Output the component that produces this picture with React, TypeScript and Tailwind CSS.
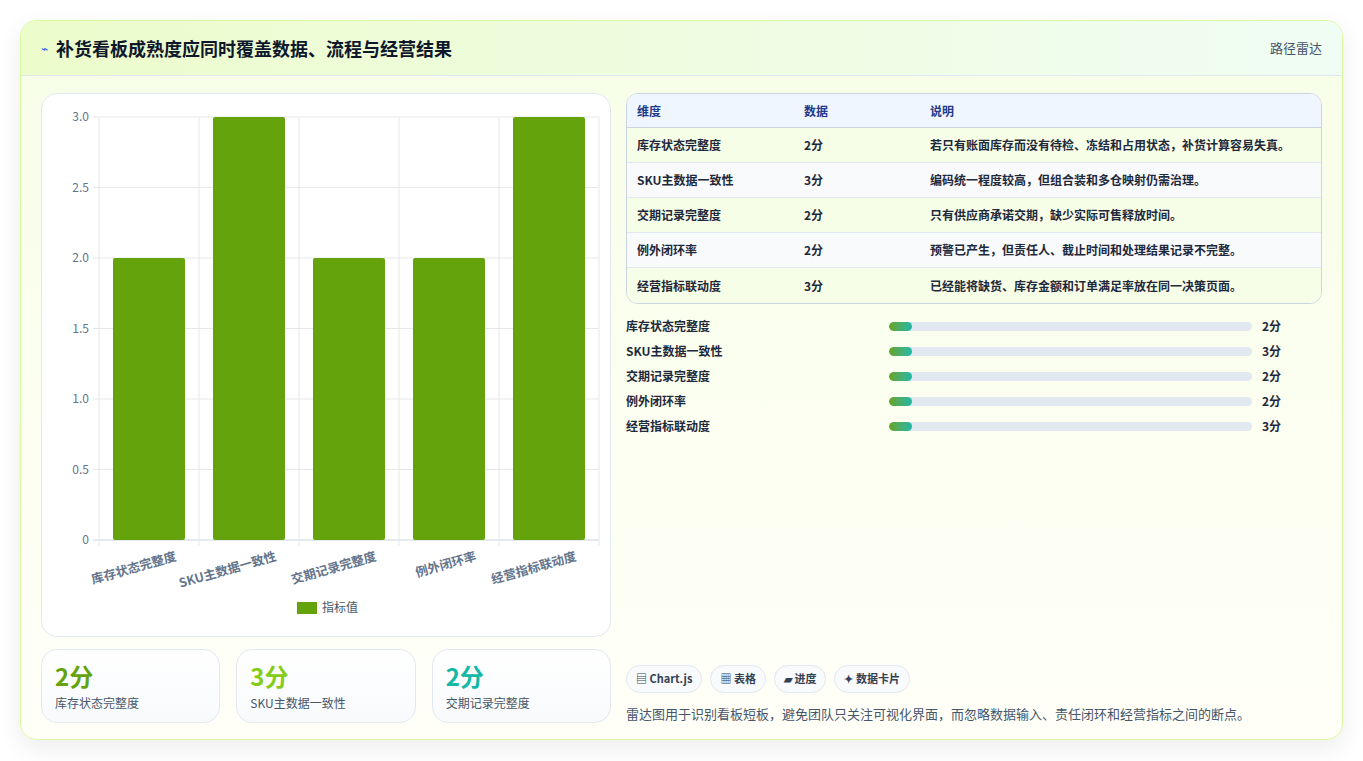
const rows = [
  { name: '库存状态完整度', v: 2, note: '若只有账面库存而没有待检、冻结和占用状态，补货计算容易失真。' },
  { name: 'SKU主数据一致性', v: 3, note: '编码统一程度较高，但组合装和多仓映射仍需治理。' },
  { name: '交期记录完整度', v: 2, note: '只有供应商承诺交期，缺少实际可售释放时间。' },
  { name: '例外闭环率', v: 2, note: '预警已产生，但责任人、截止时间和处理结果记录不完整。' },
  { name: '经营指标联动度', v: 3, note: '已经能将缺货、库存金额和订单满足率放在同一决策页面。' },
];

function Chart() {
  const x0 = 57, top = 23, bottom = 446, w = 500;
  const unit = (bottom - top) / 3;
  const ticks = [0, 0.5, 1, 1.5, 2, 2.5, 3];
  return (
    <svg width="568" height="541" viewBox="0 0 568 541" className="block">
      {ticks.map(t => {
        const y = bottom - t * unit;
        return (
          <g key={t}>
            <line x1={x0 - 6} x2={x0 + w} y1={y} y2={y} stroke={t === 0 ? '#cbd5e1' : '#e5e7eb'} />
            <text x={x0 - 10} y={y + 4} textAnchor="end" fontSize="12" fill="#64748b">{t === 0 ? '0' : t.toFixed(1)}</text>
          </g>
        );
      })}
      {[0, 1, 2, 3, 4, 5].map(i => (
        <line key={i} x1={x0 + i * 100} x2={x0 + i * 100} y1={top} y2={bottom + 6} stroke="#e5e7eb" />
      ))}
      {rows.map((r, i) => {
        const h = r.v * unit;
        const cx = x0 + i * 100 + 50;
        return (
          <g key={r.name}>
            <rect x={cx - 36} y={bottom - h} width="72" height={h} fill="#65a30d" rx="2" />
            <text x={cx + 28} y={bottom + 20} textAnchor="end" fontSize="12.5" fontWeight="600" fill="#64748b" transform={`rotate(-16 ${cx + 28} ${bottom + 20})`}>{r.name}</text>
          </g>
        );
      })}
      <rect x="255" y="508" width="20" height="12" fill="#65a30d" />
      <text x="280" y="518" fontSize="12" fill="#475569">指标值</text>
    </svg>
  );
}

export default function App() {
  return (
    <div className="min-h-screen bg-white p-5" style={{ fontFamily: '"Noto Sans CJK SC", "Noto Sans", sans-serif' }}>
      <div className="h-[720px] rounded-2xl border border-[#d9f99d] bg-gradient-to-b from-[#f7fee7] to-[#fffff8] shadow-[0_8px_24px_rgba(0,0,0,0.08)] overflow-hidden flex flex-col">
        <div className="h-[55px] shrink-0 flex items-center justify-between px-5 bg-gradient-to-r from-[#ecfccb] to-[#f0fdf4] border-b border-[#e2e8f0]">
          <div className="flex items-center gap-2">
            <span className="text-[#2563eb] text-xs">⌁</span>
            <h1 className="text-[18px] font-bold text-[#0f172a]">补货看板成熟度应同时覆盖数据、流程与经营结果</h1>
          </div>
          <span className="text-[13px] text-[#475569]">路径雷达</span>
        </div>
        <div className="flex-1 flex gap-[15px] px-5 pt-[17px] pb-[18px]">
          <div className="w-[570px] flex flex-col gap-3">
            <div className="h-[544px] rounded-2xl border border-[#e2e8f0] bg-white">
              <Chart />
            </div>
            <div className="flex gap-4">
              {[
                ['2分', '库存状态完整度', 'text-[#65a30d]'],
                ['3分', 'SKU主数据一致性', 'text-[#84cc16]'],
                ['2分', '交期记录完整度', 'text-[#14b8a6]'],
              ].map(([v, l, c]) => (
                <div key={l} className="flex-1 h-[74px] rounded-2xl border border-[#e2e8f0] bg-gradient-to-b from-white to-[#f8fafc] px-[13px] pt-[10px]">
                  <div className={`text-[24px] font-bold leading-8 ${c}`}>{v}</div>
                  <div className="text-[12px] text-[#475569] mt-[2px]">{l}</div>
                </div>
              ))}
            </div>
          </div>
          <div className="flex-1 flex flex-col">
            <div className="rounded-xl border border-[#cbd5e1] overflow-hidden bg-white text-[12px] text-[#1e293b]">
              <div className="flex h-[34px] items-center bg-[#eff6ff] border-b border-[#cbd5e1] font-bold text-[#1e3a8a] px-[10px]">
                <div className="w-[167px]">维度</div>
                <div className="w-[126px]">数据</div>
                <div>说明</div>
              </div>
              {rows.map((r, i) => (
                <div key={r.name} className={`flex h-[35px] items-center px-[10px] font-semibold ${i % 2 === 0 ? 'bg-[#f7fee7]' : 'bg-[#f8fafc]'} ${i < 4 ? 'border-b border-[#e2e8f0]' : ''}`}>
                  <div className="w-[167px]">{r.name}</div>
                  <div className="w-[126px]">{r.v}分</div>
                  <div>{r.note}</div>
                </div>
              ))}
            </div>
            <div className="mt-[13px] flex flex-col gap-[7px]">
              {rows.map(r => (
                <div key={r.name} className="flex items-center h-[18px] text-[12px] font-semibold text-[#1e293b]">
                  <div className="w-[263px]">{r.name}</div>
                  <div className="w-[363px] h-[9px] rounded-full bg-[#e2e8f0] overflow-hidden">
                    <div className="w-[23px] h-full rounded-full bg-gradient-to-r from-[#65a30d] to-[#14b8a6]" />
                  </div>
                  <div className="ml-[10px] font-bold">{r.v}分</div>
                </div>
              ))}
            </div>
            <div className="mt-auto flex gap-2">
              {['▤ Chart.js', '▦ 表格', '▰ 进度', '✦ 数据卡片'].map(t => (
                <span key={t} className="h-[28px] px-[9px] flex items-center rounded-full border border-[#e2e8f0] bg-[#f8fafc] text-[11px] font-semibold text-[#334155]">{t}</span>
              ))}
            </div>
            <p className="mt-[11px] text-[13px] text-[#475569]">雷达图用于识别看板短板，避免团队只关注可视化界面，而忽略数据输入、责任闭环和经营指标之间的断点。</p>
          </div>
        </div>
      </div>
    </div>
  );
}
